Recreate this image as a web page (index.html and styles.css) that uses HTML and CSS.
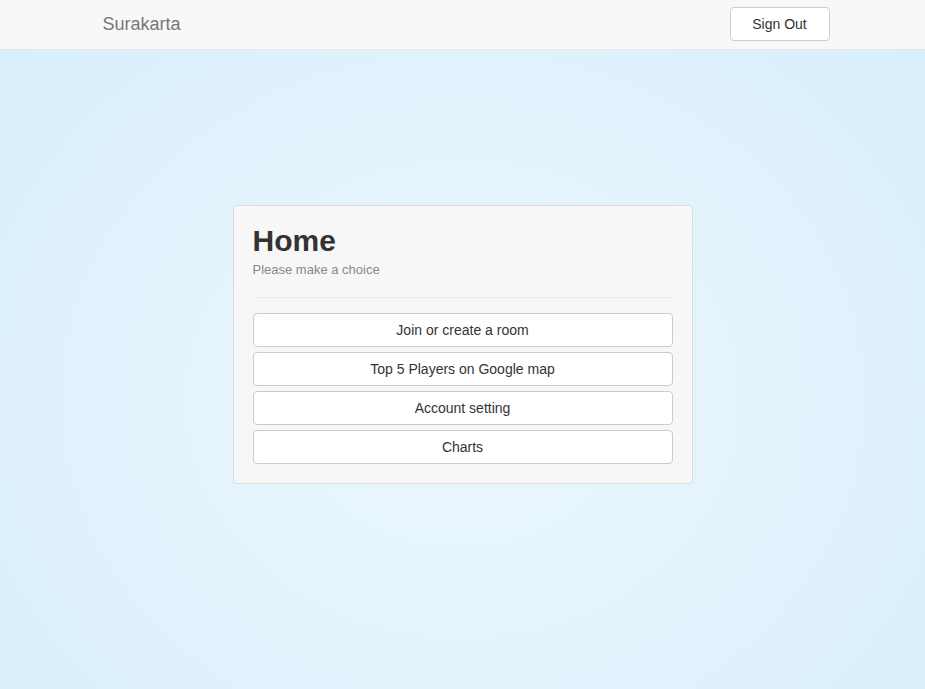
FILE: index.html
```html
<!DOCTYPE html>
<html>
<head>
<meta charset="utf-8">
<title>Surakarta</title>
<link rel="stylesheet" href="styles.css">
</head>
<body>
<nav class="navbar">
  <div class="nav-inner">
    <span class="brand">Surakarta</span>
    <button class="btn btn-nav">Sign Out</button>
  </div>
</nav>
<main class="stage">
  <section class="panel">
    <header class="panel-head">
      <h1 class="title">Home</h1>
      <p class="subtitle">Please make a choice</p>
    </header>
    <div class="choices">
      <button class="btn btn-choice">Join or create a room</button>
      <button class="btn btn-choice">Top 5 Players on Google map</button>
      <button class="btn btn-choice">Account setting</button>
      <button class="btn btn-choice">Charts</button>
    </div>
  </section>
</main>
</body>
</html>
```

FILE: styles.css
```css
* { box-sizing: border-box; }
html, body { margin: 0; padding: 0; height: 100%; }
body {
  font-family: "Liberation Sans", Arial, Helvetica, sans-serif;
  font-size: 14px;
  color: #333;
  background: radial-gradient(ellipse at 50% 58%, #ecf7fd 0%, #e3f3fc 45%, #d7eefc 100%);
  background-attachment: fixed;
}
.navbar {
  position: fixed;
  top: 0; left: 0; right: 0;
  height: 50px;
  background: #f8f8f8;
  border-bottom: 1px solid #e7e7e7;
  z-index: 10;
}
.nav-inner {
  width: 750px;
  margin: 0 auto;
  padding: 0 8px 0 15px;
  height: 48px;
  display: flex;
  align-items: center;
  justify-content: space-between;
}
.brand {
  font-size: 18px;
  color: #777;
  line-height: 20px;
}
.btn {
  font-family: inherit;
  font-size: 14px;
  color: #333;
  background: #fff;
  border: 1px solid #ccc;
  border-radius: 4px;
  height: 34px;
  padding: 6px 12px;
  line-height: 20px;
  cursor: pointer;
}
.btn-nav { width: 100px; }
.stage {
  min-height: 100vh;
  display: flex;
  align-items: center;
  justify-content: center;
}
.panel {
  width: 460px;
  background: #f7f7f7;
  border: 1px solid #dcdcdc;
  border-radius: 4px;
  padding: 18px 19px 19px 19px;
}
.panel-head {
  border-bottom: 1px solid #eaeaea;
  padding-bottom: 18px;
  margin-bottom: 15px;
}
.title {
  margin: 0;
  font-size: 30px;
  font-weight: bold;
  line-height: 33px;
  color: #333;
}
.subtitle {
  margin: 4px 0 0;
  font-size: 13px;
  color: #888;
  line-height: 18px;
}
.choices {
  display: flex;
  flex-direction: column;
  gap: 5px;
}
.btn-choice { width: 100%; }
```
